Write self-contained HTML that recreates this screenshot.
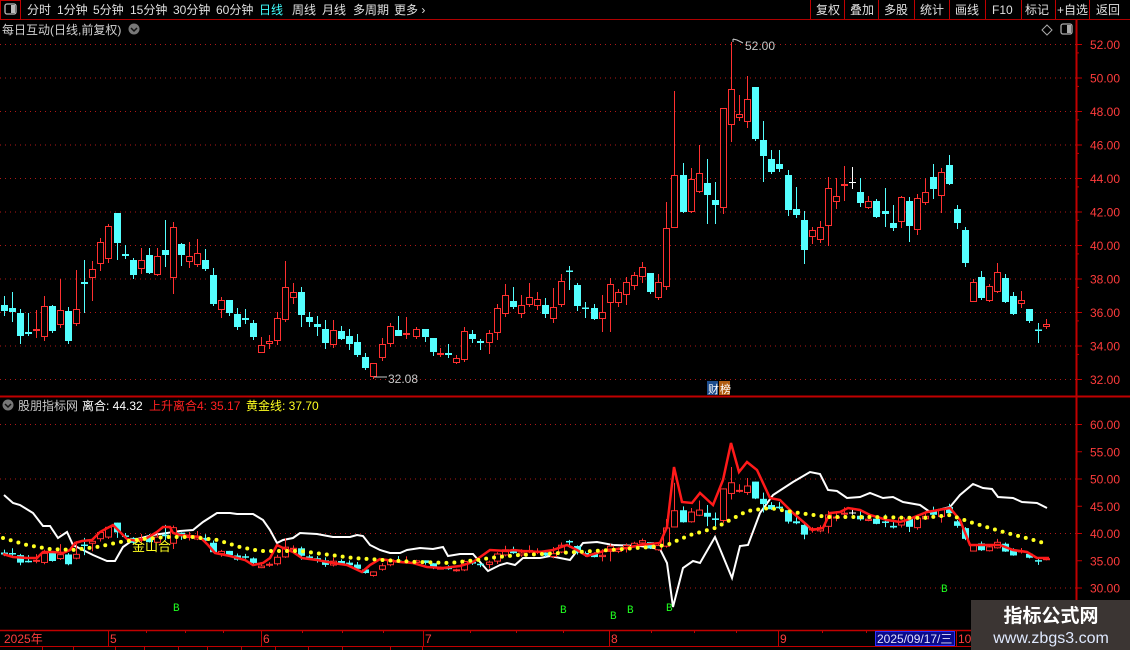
<!DOCTYPE html>
<html><head><meta charset="utf-8">
<style>
html,body{margin:0;padding:0;background:#000;width:1130px;height:650px;overflow:hidden}
body{font-family:"Liberation Sans","Noto Sans CJK SC",sans-serif;position:relative}
svg{position:absolute;left:0;top:0}
</style></head><body>
<svg id="s" width="1130" height="650" xmlns="http://www.w3.org/2000/svg" font-family="Liberation Sans, Noto Sans CJK SC, sans-serif">
<rect x="0" y="0" width="1130" height="19" fill="#000"/>
<line x1="0" y1="19.5" x2="1130" y2="19.5" stroke="#b00000"/>
<rect x="0.5" y="0.5" width="20" height="19" fill="none" stroke="#c00000"/>
<rect x="5" y="4" width="11" height="10" rx="2" fill="none" stroke="#bbb" stroke-width="1.3"/>
<rect x="11" y="5" width="4" height="8" fill="#bbb"/>
<g font-size="12" fill="#e0e0e0">
<text x="27" y="14">分时</text><text x="57" y="14">1分钟</text><text x="93" y="14">5分钟</text><text x="130" y="14">15分钟</text><text x="173" y="14">30分钟</text><text x="216" y="14">60分钟</text>
<text x="259" y="14" fill="#40ffff">日线</text><text x="292" y="14">周线</text><text x="322" y="14">月线</text><text x="353" y="14">多周期</text><text x="394" y="14">更多 ›</text>
<text x="816" y="14">复权</text><text x="850" y="14">叠加</text><text x="884" y="14">多股</text><text x="920" y="14">统计</text><text x="955" y="14">画线</text><text x="992" y="14">F10</text><text x="1025" y="14">标记</text><text x="1057" y="14">+自选</text><text x="1096" y="14">返回</text>
</g>
<g stroke="#c00000"><line x1="810.5" y1="0" x2="810.5" y2="19"/><line x1="844.5" y1="0" x2="844.5" y2="19"/><line x1="878.5" y1="0" x2="878.5" y2="19"/><line x1="914.5" y1="0" x2="914.5" y2="19"/><line x1="949.5" y1="0" x2="949.5" y2="19"/><line x1="985.5" y1="0" x2="985.5" y2="19"/><line x1="1021.5" y1="0" x2="1021.5" y2="19"/><line x1="1055.5" y1="0" x2="1055.5" y2="19"/><line x1="1089.5" y1="0" x2="1089.5" y2="19"/></g>
<text x="2" y="34" font-size="12" fill="#d0d0d0">每日互动(日线,前复权)</text>
<circle cx="134" cy="29" r="5.5" fill="#777"/><path d="M131 28l3 3 3-3" stroke="#111" fill="none" stroke-width="1.5"/>
<path d="M1047 25l5 5-5 5-5-5z" fill="none" stroke="#aaa"/>
<rect x="1061" y="24" width="11" height="10" rx="2" fill="none" stroke="#aaa" stroke-width="1.3"/><rect x="1067" y="25" width="4" height="8" fill="#aaa"/>
<line x1="1076.5" y1="20" x2="1076.5" y2="630" stroke="#c00000" stroke-width="2"/>
<line x1="0" y1="396.5" x2="1130" y2="396.5" stroke="#c00000" stroke-width="2"/>
<g id="grid" stroke="#b01818" stroke-dasharray="1 4"></g>
<g id="ax" font-size="12" fill="#ff3c3c"></g>
<g id="main"></g>
<text x="745" y="50" font-size="12" fill="#c8c8c8">52.00</text>
<path d="M733 42v-3M733 39l4 1 6 3" stroke="#c8c8c8" fill="none"/>
<text x="388" y="383" font-size="12" fill="#c8c8c8">32.08</text>
<path d="M374 377l4 0h9" stroke="#c8c8c8" fill="none"/>
<rect x="707" y="381" width="11" height="14" fill="#1c4c8c"/><text x="708" y="393" font-size="11" fill="#fff">财</text>
<rect x="719" y="381" width="11" height="14" fill="#b05c10"/><text x="720" y="393" font-size="11" fill="#fff">榜</text>
<circle cx="8" cy="405" r="5.5" fill="#777"/><path d="M5 404l3 3 3-3" stroke="#111" fill="none" stroke-width="1.5"/>
<text x="18" y="410" font-size="12" fill="#c8c8c8">股朋指标网</text>
<text x="82" y="410" font-size="12" fill="#fff">离合: 44.32</text>
<text x="149" y="410" font-size="12" fill="#ff2020">上升离合4: 35.17</text>
<text x="246" y="410" font-size="12" fill="#ffff20">黄金线: 37.70</text>
<g id="ind"></g>
<text x="132" y="551" font-size="13" fill="#ffff20">金山合</text>
<g font-size="11" fill="#20ff20" font-family="Liberation Mono, monospace">
<text x="173" y="611">B</text><text x="560" y="613">B</text><text x="610" y="619">B</text><text x="627" y="613">B</text><text x="666" y="611">B</text><text x="941" y="592">B</text></g>
<line x1="0" y1="630.5" x2="1076" y2="630.5" stroke="#c00000" stroke-width="1.5"/>
<line x1="0" y1="646.5" x2="1130" y2="646.5" stroke="#c00000"/>
<g stroke="#c00000"><line x1="108.5" y1="630" x2="108.5" y2="646"/><line x1="261.5" y1="630" x2="261.5" y2="646"/><line x1="423.5" y1="630" x2="423.5" y2="646"/><line x1="609.5" y1="630" x2="609.5" y2="646"/><line x1="778.5" y1="630" x2="778.5" y2="646"/><line x1="956.5" y1="630" x2="956.5" y2="646"/>
<line x1="146.5" y1="630" x2="146.5" y2="633"/><line x1="185.5" y1="630" x2="185.5" y2="633"/><line x1="223.5" y1="630" x2="223.5" y2="633"/><line x1="302.5" y1="630" x2="302.5" y2="633"/><line x1="342.5" y1="630" x2="342.5" y2="633"/><line x1="383.5" y1="630" x2="383.5" y2="633"/><line x1="470.5" y1="630" x2="470.5" y2="633"/><line x1="516.5" y1="630" x2="516.5" y2="633"/><line x1="563.5" y1="630" x2="563.5" y2="633"/><line x1="651.5" y1="630" x2="651.5" y2="633"/><line x1="694.5" y1="630" x2="694.5" y2="633"/><line x1="736.5" y1="630" x2="736.5" y2="633"/><line x1="822.5" y1="630" x2="822.5" y2="633"/><line x1="866.5" y1="630" x2="866.5" y2="633"/>
<line x1="42.5" y1="646" x2="42.5" y2="650"/><line x1="73.5" y1="646" x2="73.5" y2="650"/><line x1="115.5" y1="646" x2="115.5" y2="650"/><line x1="144.5" y1="646" x2="144.5" y2="650"/><line x1="178.5" y1="646" x2="178.5" y2="650"/><line x1="207.5" y1="646" x2="207.5" y2="650"/><line x1="241.5" y1="646" x2="241.5" y2="650"/><line x1="275.5" y1="646" x2="275.5" y2="650"/><line x1="308.5" y1="646" x2="308.5" y2="650"/><line x1="342.5" y1="646" x2="342.5" y2="650"/><line x1="390.5" y1="646" x2="390.5" y2="650"/><line x1="422.5" y1="646" x2="422.5" y2="650"/></g>
<g font-size="12" fill="#ff3c3c"><text x="4" y="643">2025年</text><text x="110" y="643">5</text><text x="263" y="643">6</text><text x="425" y="643">7</text><text x="611" y="643">8</text><text x="780" y="643">9</text><text x="958" y="643">10</text></g>
<rect x="875.5" y="631.5" width="79" height="14" fill="#0a0a8a" stroke="#3030ff"/>
<text x="877" y="643" font-size="12" fill="#e0e0ff">2025/09/17/三</text>
<rect x="971" y="600" width="159" height="50" fill="#3b3533"/>
<text x="1051" y="622" font-size="19" font-weight="bold" fill="#fff" text-anchor="middle">指标公式网</text>
<text x="1051" y="643" font-size="16" fill="#dfe9ff" text-anchor="middle">www.zbgs3.com</text>
</svg>
<script>
var NS="http://www.w3.org/2000/svg";
function el(p,t,a){var e=document.createElementNS(NS,t);for(var k in a)e.setAttribute(k,a[k]);p.appendChild(e);return e;}
var g=document.getElementById('grid'),ax=document.getElementById('ax'),m=document.getElementById('main'),ind=document.getElementById('ind');
for(var p=52;p>=32;p-=2){var y=44+(52-p)*16.75;el(g,'line',{x1:0,y1:y+.5,x2:1076,y2:y+.5});el(ax,'line',{x1:1076,y1:y+.5,x2:1082,y2:y+.5,stroke:'#c00000'});var t=el(ax,'text',{x:1090,y:y+5});t.textContent=p.toFixed(2);
 if(p>32){var y2=y+8.4;el(ax,'line',{x1:1076,y1:y2+.5,x2:1079,y2:y2+.5,stroke:'#c00000'});}}
for(var p=60;p>=30;p-=5){var y=424+(60-p)*5.45;if(p%10==0)el(g,'line',{x1:0,y1:y+.5,x2:1076,y2:y+.5});el(ax,'line',{x1:1076,y1:y+.5,x2:1082,y2:y+.5,stroke:'#c00000'});var t=el(ax,'text',{x:1090,y:y+5});t.textContent=p.toFixed(2);}
var D=[[4,'c',305,311,296,316],[12,'c',308,312,292,322],[20,'c',313,336,309,344],[28,'c',332,334,313,336],[36,'r',329,331,310,338],[44,'r',306,337,296,341],[52,'c',306,331,305,333],[60,'r',310,325,279,328],[68,'c',311,341,307,344],[76,'r',309,324,270,326],[84,'c',282,284,260,313],[92,'r',269,278,261,301],[100,'r',242,264,238,271],[108,'r',226,259,224,263],[117,'c',213,243,213,260],[125,'c',254,256,245,259],[133,'c',260,275,258,279],[141,'r',260,269,248,274],[149,'c',255,273,248,274],[157,'r',256,275,248,276],[165,'c',250,255,220,267],[173,'r',227,278,222,294],[181,'c',244,255,243,266],[189,'r',256,262,242,268],[197,'r',253,265,239,267],[205,'c',260,269,249,271],[213,'c',275,304,268,306],[221,'r',300,310,297,318],[229,'c',300,313,300,316],[237,'c',314,327,308,330],[245,'c',318,320,309,324],[253,'c',323,337,320,340],[261,'r',345,353,337,353],[269,'r',341,344,335,349],[277,'r',318,341,312,345],[285,'r',287,320,261,322],[293,'r',292,298,283,304],[301,'c',292,315,287,327],[309,'c',317,322,312,327],[317,'c',324,327,316,336],[325,'c',329,343,320,349],[333,'r',330,345,320,348],[341,'c',331,339,326,340],[349,'c',336,344,329,350],[357,'c',342,355,334,357],[365,'c',357,368,353,370],[373,'r',363,377,363,379],[382,'r',344,358,338,361],[390,'r',326,344,323,347],[398,'c',330,336,316,336],[406,'r',333,335,317,339],[416,'r',329,337,327,339],[425,'c',329,337,329,342],[433,'c',338,352,338,356],[440,'r',353,355,348,357],[448,'c',353,355,344,358],[456,'r',358,363,355,364],[464,'r',331,360,327,362],[472,'c',334,339,330,343],[480,'c',341,343,339,350],[489,'r',333,343,330,354],[497,'r',308,333,304,340],[505,'r',295,314,284,317],[513,'c',301,307,287,309],[521,'r',305,314,295,318],[529,'r',297,305,283,307],[537,'r',299,306,292,310],[545,'c',305,314,298,318],[553,'r',307,319,288,323],[561,'r',281,305,274,307],[569,'c',271,272,266,290],[577,'c',285,306,283,311],[585,'c',308,309,302,318],[594,'c',308,319,304,320],[602,'r',312,319,295,332],[610,'r',284,303,278,332],[618,'r',292,303,289,307],[626,'r',282,295,277,305],[634,'r',275,286,272,290],[642,'r',267,277,262,283],[650,'c',273,292,273,294],[658,'r',282,298,274,300],[666,'r',228,287,202,290],[674,'r',175,228,91,228],[683,'c',175,212,163,213],[691,'r',179,212,168,213],[699,'r',173,192,145,193],[707,'c',183,195,159,224],[715,'c',200,205,182,224],[723,'r',108,208,108,214],[731,'r',89,125,42,142],[739,'r',114,118,95,121],[747,'r',99,122,76,128],[755,'c',87,139,87,141],[763,'c',140,156,121,182],[771,'c',159,172,150,174],[779,'c',164,169,150,172],[788,'c',175,210,170,216],[796,'c',209,215,187,218],[804,'c',220,250,211,264],[812,'r',230,237,227,244],[820,'r',227,240,221,243],[828,'r',188,226,177,246],[836,'r',196,202,178,209],[844,'r',184,186,166,201],[852,'w',182,182,167,189],[860,'c',192,203,178,207],[868,'r',201,208,196,209],[876,'c',201,217,199,218],[885,'c',211,214,188,227],[893,'c',223,228,205,231],[901,'r',197,222,196,228],[909,'c',201,226,197,242],[917,'r',198,230,194,235],[925,'r',192,203,178,205],[933,'c',177,189,164,199],[941,'r',172,196,168,213],[949,'c',165,184,155,185],[957,'c',209,223,205,229],[965,'c',230,263,227,267],[973,'r',282,302,279,302],[981,'c',277,298,271,300],[989,'r',286,301,284,302],[997,'r',272,292,263,293],[1005,'c',278,302,274,303],[1013,'c',296,314,292,315],[1021,'r',300,304,291,308],[1029,'c',309,321,309,323],[1038,'c',330,330,323,343],[1046,'r',324,327,319,329]];
function draw(par,f){D.forEach(function(d){var x=d[0],c=d[1]=='c'?'#54ffff':d[1]=='w'?'#fff':'#ff3030';var a=f(d[2]),b=f(d[3]),h=f(d[4]),l=f(d[5]);
 el(par,'line',{x1:x+.5,y1:h,x2:x+.5,y2:l,stroke:c});
 if(d[1]=='c'){if(b-a<1.5)el(par,'rect',{x:x-3,y:a-0.5,width:7,height:Math.max(1.5,b-a),fill:c});else el(par,'rect',{x:x-3,y:a,width:7,height:b-a,fill:c});}
 else if(d[1]=='w'){el(par,'line',{x1:x-3,y1:a+.5,x2:x+4,y2:a+.5,stroke:c});}
 else{if(b-a<2){el(par,'line',{x1:x-3,y1:a+.5,x2:x+4,y2:a+.5,stroke:c,'stroke-width':2});}else el(par,'rect',{x:x-2.5,y:a+.5,width:6,height:b-a-1,fill:'#000',stroke:c});}
});}
draw(m,function(y){return y;});
var T=function(y){return 467.6+(y-44)*0.3254;};
var W=[[4,495],[13,503],[20,505],[33,513],[43,526],[50,526],[58,538],[67,532],[73,545],[83,550],[93,555],[107,561],[115,561],[123,547],[133,540],[153,535],[167,533],[180,531],[193,530],[203,522],[217,513],[230,513],[237,514],[253,514],[263,520],[270,530],[277,543],[283,540],[293,538],[300,533],[317,534],[333,537],[350,537],[357,535],[363,536],[370,545],[380,550],[390,553],[400,553],[407,550],[420,548],[433,549],[443,547],[448,556],[460,554],[473,554],[480,562],[488,571],[500,565],[507,563],[515,565],[523,558],[540,558],[550,556],[570,560],[583,543],[597,542],[613,545],[640,546],[660,549],[667,563],[673,607],[683,568],[693,561],[700,563],[715,537],[732,578],[740,546],[748,545],[760,513],[773,495],[793,482],[810,472],[820,474],[828,490],[837,491],[847,498],[860,497],[870,493],[883,498],[893,497],[903,502],[920,505],[930,512],[950,507],[960,495],[973,484],[983,488],[992,489],[998,497],[1013,498],[1022,502],[1037,503],[1047,508]];
var R=[[3,554],[13,557],[27,558],[37,558],[43,552],[53,552],[63,553],[70,550],[75,543],[82,541],[92,540],[100,532],[113,525],[120,532],[127,539],[137,541],[147,538],[157,532],[163,527],[170,527],[173,533],[180,535],[200,537],[208,545],[215,553],[230,556],[245,560],[253,565],[263,563],[270,558],[277,545],[283,548],[293,552],[302,558],[317,560],[333,563],[347,565],[362,572],[370,565],[380,559],[400,562],[413,563],[427,567],[443,568],[460,566],[473,562],[483,555],[490,550],[507,551],[513,550],[523,551],[540,552],[553,550],[567,545],[577,550],[587,556],[607,550],[627,548],[640,545],[660,543],[667,527],[674,467],[682,502],[692,503],[700,493],[713,505],[723,480],[731,443],[739,472],[747,462],[757,470],[770,498],[780,500],[793,513],[807,525],[812,530],[823,528],[830,513],[840,512],[848,508],[860,510],[870,515],[887,520],[900,522],[907,520],[927,512],[950,508],[960,520],[970,545],[980,545],[1000,545],[1013,550],[1027,552],[1037,558],[1049,558]];
var Y=[[3,538],[27,545],[50,549],[73,550],[97,547],[120,542],[143,539],[167,537],[193,537],[217,540],[240,547],[260,551],[277,551],[300,551],[323,554],[353,558],[383,560],[417,562],[450,563],[477,560],[497,557],[520,555],[543,554],[577,552],[610,550],[650,547],[667,545],[690,535],[715,528],[747,511],[770,508],[793,512],[827,517],[873,517],[923,518],[950,515],[973,523],[1007,533],[1030,539],[1047,544]];
function pts(a){return a.map(function(p){return p[0]+','+p[1];}).join(' ');}
el(ind,'polyline',{points:pts(W),fill:'none',stroke:'#fff','stroke-width':2});
draw(ind,T);
el(ind,'polyline',{points:pts(R),fill:'none',stroke:'#ff1a1a','stroke-width':2.5});
el(ind,'polyline',{points:pts(Y),fill:'none',stroke:'#ffff20','stroke-width':4,'stroke-linecap':'round','stroke-dasharray':'0 8'});
</script>
</body></html>
